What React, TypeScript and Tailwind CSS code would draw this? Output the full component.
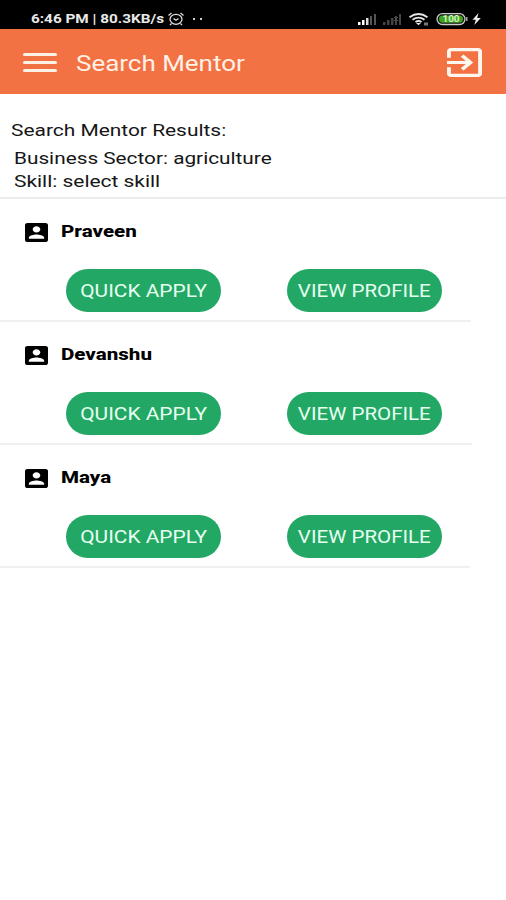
import React from "react";

const mentors = [
  { name: "Praveen", divider: "w-[471px]" },
  { name: "Devanshu", divider: "w-[472px]" },
  { name: "Maya", divider: "w-[470px]" },
];

function StatusBar() {
  return (
    <div className="flex h-[29px] items-start bg-black pl-[31px] pt-[11px] text-[#e8e8e8]">
      <span className="w-[136px] origin-left scale-x-[1.178] whitespace-nowrap text-[13px] font-bold leading-4">
        6:46 PM | 80.3KB/s
      </span>
      <svg className="mt-px h-[14px] w-[18px]" viewBox="0 0 18 14" fill="none" stroke="#ddd" strokeWidth="1.3">
        <ellipse cx="9" cy="7.3" rx="6" ry="5" />
        <path d="M1.5 3.5 4.5 1M16.5 3.5 13.5 1M4.5 11.5 3 13M13.5 11.5 15 13M6.500 6.500 9 8.200l2.500-1.700" />
      </svg>
      <span className="ml-[8px] mt-[7px] h-[2px] w-[2px] bg-[#ccc]" />
      <span className="ml-[5px] mt-[7px] h-[2px] w-[2px] bg-[#ccc]" />
      <svg className="ml-[154px] h-[16px] w-[130px]" viewBox="356 11 130 16">
        <path d="M358 22h2.500v3H358zM362 20h2.500v5H362z" fill="#fff" />
        <path d="M366 18h2.500v7H366z" fill="#ddd" />
        <path d="M370 16h2v9h-2zM374 14h2v11h-2z" fill="#555" />
        <path d="M383 22h2.500v3H383zM387 20h2.500v5H387zM391 18h2.500v7H391zM395 16h2v9h-2zM399 14h2v11h-2z" fill="#444" />
        <path d="m394 17 4 4m0-4-4 4" stroke="#555" />
        <g fill="none" stroke="#e5e5e5" strokeWidth="1.900">
          <path d="M409.500 17.200q9-6.500 18 0M412.500 19.700q6-4.200 12 0M415.500 22q3-2 6 0" />
        </g>
        <path d="m416 23 2.500 2.300 2.500-2.300z" fill="#e5e5e5" />
        <path d="M424 22.500h4v3h-4z" fill="#777" />
        <rect x="437" y="13.700" width="28" height="10.800" rx="5.400" fill="#111" stroke="#ccc" strokeWidth="1.300" />
        <rect x="439" y="15.500" width="24" height="7.200" rx="3.600" fill="#3fa51f" />
        <path d="M466.800 17v4" stroke="#ccc" strokeWidth="1.200" />
        <text x="451" y="22.300" textAnchor="middle" textLength="17" lengthAdjust="spacingAndGlyphs" fontSize="8.500" fontWeight="700" fill="#d5f3c4">
          100
        </text>
        <path d="m478.500 13-6 6.700h3.300l-1.500 5.300 6.500-7h-3.600z" fill="#eee" />
      </svg>
    </div>
  );
}

function Header() {
  return (
    <header className="flex h-[65px] items-center bg-[#f37243] pl-[23px] pr-[24px] text-[#fff1e6]">
      <div className="mt-[2px] flex w-[34px] flex-col gap-[5px]">
        <span className="h-[3px] rounded-sm bg-[#fff1e6]" />
        <span className="h-[3px] rounded-sm bg-[#fff1e6]" />
        <span className="h-[3px] rounded-sm bg-[#fff1e6]" />
      </div>
      <h1 className="ml-[19px] mt-[4px] origin-left scale-x-[1.18] whitespace-nowrap text-[22px] leading-[28px]">Search Mentor</h1>
      <svg className="ml-auto mt-[2px] h-[29px] w-[35px]" viewBox="3 3 18 18" preserveAspectRatio="none" fill="#fff6ee">
        <path d="M10.090 15.590 11.500 17l5-5-5-5-1.410 1.410L12.670 11H3v2h9.670l-2.580 2.590zM19 3H5c-1.110 0-2 .9-2 2v4h2V5h14v14H5v-4H3v4c0 1.100.89 2 2 2h14c1.100 0 2-.9 2-2V5c0-1.100-.9-2-2-2z" />
      </svg>
    </header>
  );
}

function PillButton({ label, stretch }: { label: string; stretch: string }) {
  return (
    <button className="flex h-[42.500px] w-[155px] items-center justify-center rounded-full bg-[#22a765] pt-px text-[18px] leading-[26px] text-[#e6fff0]">
      <span className={`whitespace-nowrap ${stretch}`}>{label}</span>
    </button>
  );
}

function MentorRow({ name, divider }: { name: string; divider: string }) {
  return (
    <li className="flex h-[123px] flex-col">
      <div className="mt-[20px] flex h-[24px] items-center pl-[25px]">
        <svg className="mt-[2px] h-[19px] w-[23px]" viewBox="3 3 18 18" preserveAspectRatio="none" fill="#000">
          <path d="M3 5v14c0 1.100.89 2 2 2h14c1.100 0 2-.9 2-2V5c0-1.100-.9-2-2-2H5c-1.110 0-2 .9-2 2zm12 4c0 1.660-1.340 3-3 3s-3-1.340-3-3 1.340-3 3-3 3 1.340 3 3zm-9 8c0-2 4-3.100 6-3.100s6 1.100 6 3.100v1H6v-1z" />
        </svg>
        <span className="ml-[13px] origin-left scale-x-[1.21] whitespace-nowrap text-[17px] font-extrabold leading-[22px]">{name}</span>
      </div>
      <div className="mt-[26px] flex gap-[65.500px] pl-[66px]">
        <PillButton label="QUICK APPLY" stretch="scale-x-[1.16]" />
        <PillButton label="VIEW PROFILE" stretch="scale-x-[1.14]" />
      </div>
      <div className={`mt-auto h-[2px] bg-[#f0f0f0] ${divider}`} />
    </li>
  );
}

export default function App() {
  return (
    <main className="flex h-[900px] w-[506px] flex-col overflow-hidden bg-white font-['Roboto','Liberation_Sans',sans-serif] text-black">
      <StatusBar />
      <Header />
      <section className="flex h-[105px] flex-col items-start border-b-2 border-[#ececec] pl-[11px] pt-[25px] text-[17px] leading-[23px] text-[#161616]">
        <p className="origin-left scale-x-[1.23] whitespace-nowrap">Search Mentor Results:</p>
        <p className="ml-[3px] mt-[5px] origin-left scale-x-[1.222] whitespace-nowrap">Business Sector: agriculture</p>
        <p className="ml-[3px] origin-left scale-x-[1.23] whitespace-nowrap">Skill: select skill</p>
      </section>
      <ul>
        {mentors.map((mentor) => (
          <MentorRow key={mentor.name} {...mentor} />
        ))}
      </ul>
    </main>
  );
}
